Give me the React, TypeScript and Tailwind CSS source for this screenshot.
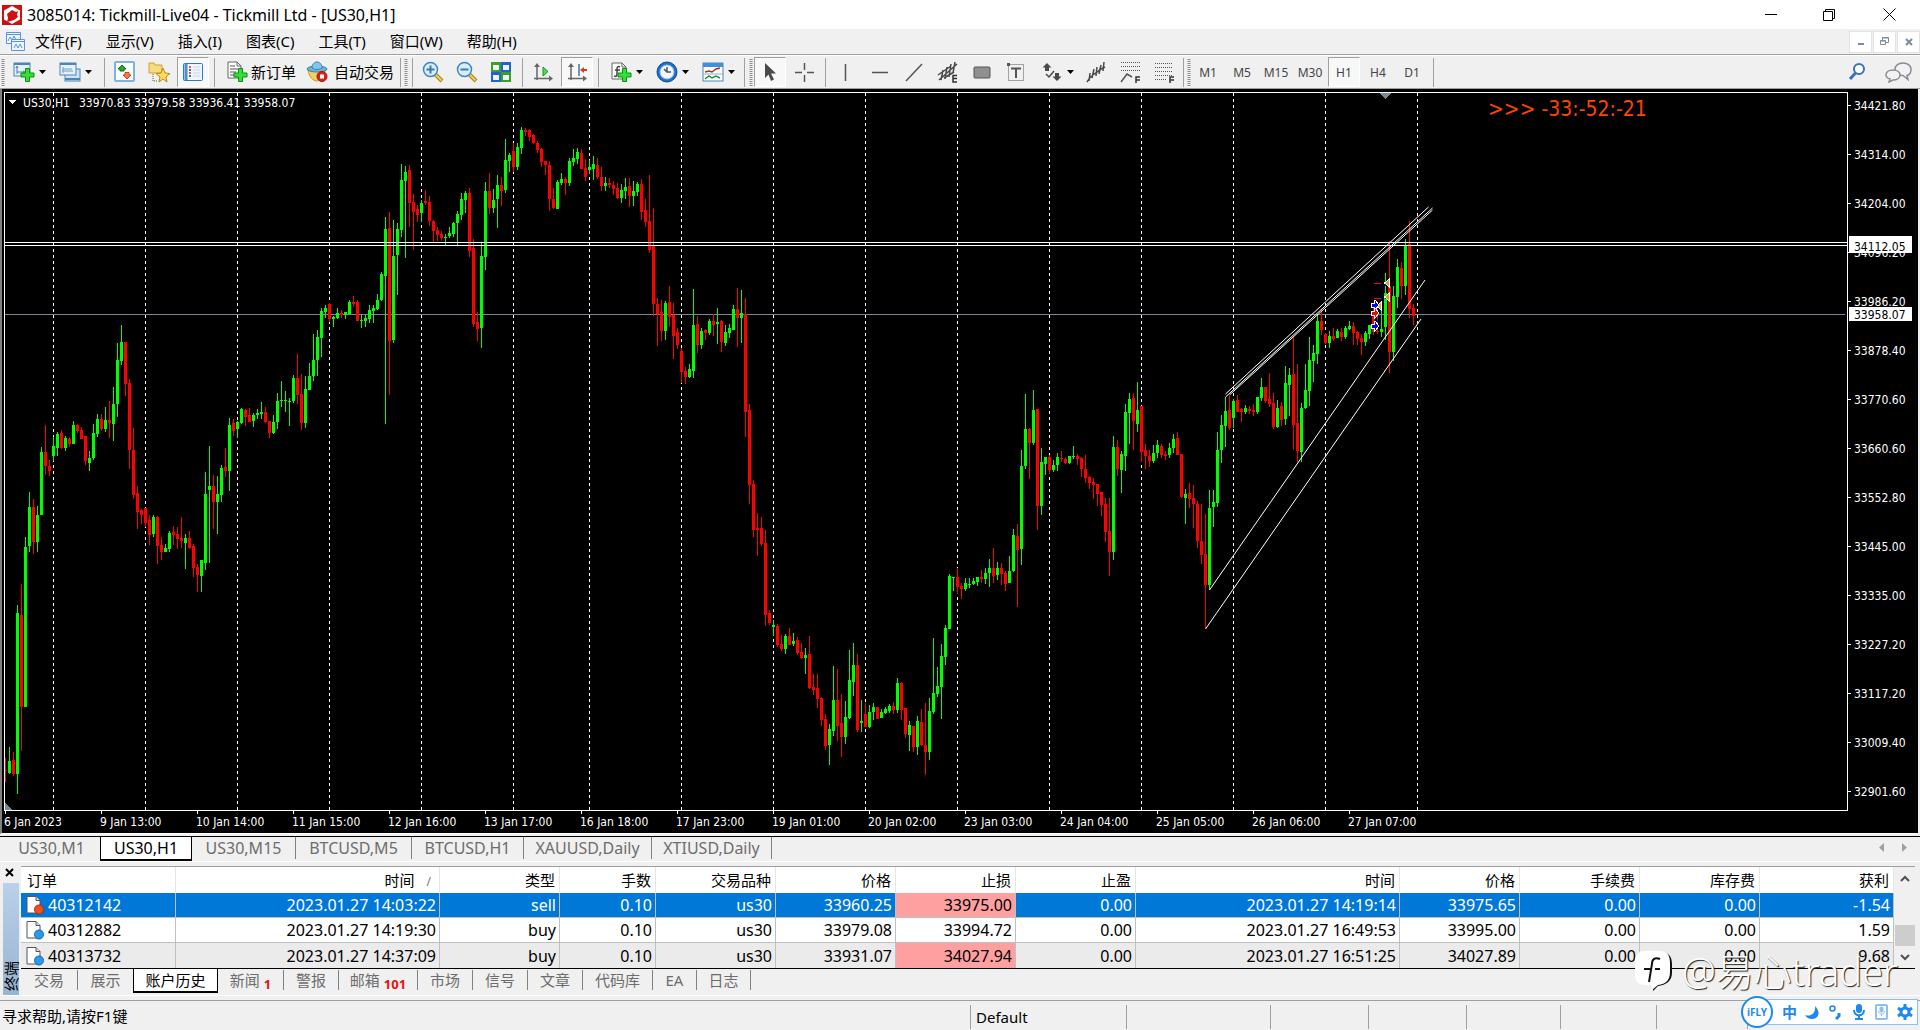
import { useState } from 'react';
import type { ReactNode } from 'react';

// every candle is colour + high, body top, body bottom, low (in chart steps from the top)
const CANDLES = `
r1415,1440,1444,1466 g1392,1422,1447,1449 r1403,1420,1449,1454 g1091,1108,1449,1492 r1047,1112,1307,1401 g947,968,1307,1307
g852,884,966,979 r867,884,958,983 g881,901,958,979 g756,767,901,901 r710,767,797,816 r784,797,807,818 g735,754,776,786
g725,729,759,776 r720,727,759,761 g733,737,759,765 r735,740,750,756 g701,710,750,750 r708,710,723,727 r714,720,740,740
r733,733,786,795 g765,780,790,807 g708,727,780,784 g687,697,729,735 r687,697,718,723 g672,699,718,725 r659,699,706,737
g629,665,708,744 g536,572,665,693 g498,534,574,583 r534,534,623,648 r612,621,763,803 r716,763,858,867 r839,854,894,930
r888,890,901,920 r885,885,917,926 r901,911,943,964 g901,905,941,947 r903,905,966,1004 r947,964,979,996 g962,970,979,979
g934,939,972,979 r924,937,943,964 r926,941,951,972 r905,949,956,970 g941,949,960,1015 r934,949,970,973 r962,966,1013,1032
r1004,1011,1028,1064 g996,996,1030,1064 g809,856,1002,1017 g754,839,848,1002 r816,839,873,930 g818,856,873,941 g795,801,858,873
r759,799,807,820 g695,710,807,850 r697,706,723,733 g701,703,718,737 g674,676,706,708 r676,678,693,712 r674,689,703,703
g684,689,701,714 g676,684,689,697 g661,682,687,697 r672,682,703,706 r701,701,727,737 g689,703,727,729 g642,659,703,718
g617,657,660,672 g638,657,660,682 g653,658,661,712 g604,610,659,663 r559,610,646,665 r602,644,706,720 g606,634,706,716
g578,606,636,636 g517,572,606,617 g509,523,572,606 g462,468,525,566 g456,462,470,483 r451,453,485,492 g479,481,485,502
g462,473,483,485 r466,473,477,483 g470,470,477,485 g445,449,475,475 r436,449,453,460 r445,449,489,489 g477,487,490,504
g477,483,489,502 g456,466,485,494 g456,462,468,494 g432,445,464,466 g386,390,445,447 g269,295,394,708 r259,292,532,646
g275,352,530,536 g282,295,350,434 g157,191,297,311 g161,174,193,356 r159,170,240,290 r220,237,259,339 r244,252,265,280
g233,239,261,280 r212,235,239,244 r225,237,278,288 r275,278,299,322 r290,297,307,320 r299,305,314,320 g305,311,314,328
g290,303,309,314 g280,282,305,311 g257,263,282,328 g218,231,265,275 g214,218,233,261 r208,218,341,354 r316,335,496,502
r470,492,506,532 g324,352,504,547 g195,214,354,381 r176,214,250,263 g210,233,250,261 g180,201,231,292 r184,201,214,246
g104,148,212,218 g133,138,150,174 r112,129,163,174 g112,121,163,170 g78,85,123,136 r81,85,89,97 r83,85,100,108
r93,95,112,114 r108,112,127,133 r123,125,153,163 r150,150,159,180 r150,159,231,256 r208,231,250,252 g191,195,252,252
g176,189,197,201 r184,189,197,222 g144,150,197,203 g125,144,153,161 g123,131,146,157 r125,133,167,167 r146,165,184,193
g148,163,170,178 g140,157,167,191 r144,159,184,189 r163,184,203,214 g184,197,203,214 r186,197,201,208 r193,201,210,222
r197,208,229,231 g199,212,229,239 g186,206,214,231 r186,203,225,248 g193,214,225,246 g195,199,216,225 r189,199,259,275
r231,254,280,290 r180,278,339,345 r250,330,453,479 r441,453,475,542 r445,470,511,532 g447,451,511,530 r415,449,481,502
r451,477,521,570 r504,513,540,549 r547,553,598,621 r587,595,608,623 g581,591,608,610 g422,498,595,610 r479,496,540,557
g504,511,540,549 r506,509,515,530 g485,489,515,519 r475,489,498,521 g462,492,496,538 r487,489,534,555 g498,513,536,542
g496,504,515,525 g456,464,509,509 r420,464,483,545 g424,473,483,536 r441,475,682,735 r665,678,837,877 r826,835,932,947
r896,928,932,987 r905,928,962,966 r932,960,1112,1136 r1102,1108,1129,1134 g1123,1134,1138,1157 r1132,1136,1176,1180
r1155,1174,1184,1189 g1153,1157,1184,1195 r1140,1157,1176,1176 g1151,1168,1174,1178 r1159,1165,1193,1197 r1172,1191,1204,1206
g1182,1197,1204,1237 r1157,1195,1267,1269 r1237,1265,1271,1282 r1237,1267,1290,1309 r1286,1288,1335,1348 r1322,1333,1390,1398
g1343,1354,1388,1430 g1220,1293,1358,1369 r1227,1293,1348,1380 r1280,1341,1371,1413 g1295,1329,1371,1386 g1187,1250,1331,1333
g1172,1218,1254,1284 r1195,1218,1356,1360 g1293,1337,1341,1360 r1299,1322,1350,1350 g1303,1318,1350,1352 g1299,1307,1318,1335
r1307,1307,1333,1333 g1312,1318,1331,1331 g1307,1312,1320,1322 g1301,1305,1316,1320 r1297,1305,1314,1322 g1246,1257,1314,1320
r1254,1257,1314,1335 r1310,1310,1365,1373 g1337,1346,1367,1401 r1348,1348,1392,1403 g1326,1337,1392,1409 r1312,1339,1388,1390
r1299,1388,1403,1451 g1288,1316,1403,1420 g1161,1278,1318,1322 g1223,1263,1280,1286 g1174,1199,1265,1333 g1134,1140,1201,1218
g1026,1030,1142,1142 g1032,1032,1034,1062 r1013,1032,1053,1068 r1045,1051,1057,1079 g1034,1045,1057,1061 g1034,1046,1049,1055
g1034,1040,1047,1049 g1032,1032,1042,1051 r1017,1032,1036,1045 g1013,1023,1036,1047 g994,1013,1023,1053 r970,1013,1030,1045
g1000,1013,1028,1038 r1002,1013,1026,1049 r1019,1023,1047,1062 g987,1019,1045,1045 g930,943,1019,1021 r920,945,975,1095
g763,797,972,1006 g644,718,797,803 r716,718,748,824 g636,678,748,752 r676,676,881,932 g759,788,881,901 g778,778,792,816
r773,778,805,814 g784,795,805,809 g769,778,795,807 r765,779,782,788 r778,782,790,792 g776,776,790,792 g754,775,778,782
r771,776,782,795 r778,780,803,820 r773,803,822,833 r818,820,833,845 r822,831,837,867 r835,835,856,881 r852,852,879,903
r865,877,937,958 r865,934,979,1030 g733,756,979,996 r742,756,803,818 g765,771,805,854 g665,682,776,807 g642,655,684,750
r642,653,701,763 g619,678,708,725 r669,670,767,788 r750,763,776,803 r763,776,786,799 g752,769,786,790 g742,752,769,780
r750,754,773,780 r765,771,776,784 g748,759,773,780 g729,740,759,769 r725,737,773,773 r771,771,862,865 g845,856,865,920
r833,854,867,885 r837,865,877,928 r871,877,956,970 r877,956,985,1004 r898,983,1049,1140 g848,886,1049,1059 g848,873,884,926
g725,763,875,884 g689,710,763,790 g650,680,712,756 r648,678,716,720 g655,659,695,716 r646,657,682,682 r674,676,682,703
g667,674,682,687 r670,676,680,687 r665,679,682,691 g650,651,682,687 g610,629,653,659 r629,629,659,663 r600,655,665,672
r642,663,714,718 g657,674,714,716 r661,670,699,712 g585,621,697,710 g589,604,625,691 r521,602,710,763 r581,706,765,788
g663,674,767,788 g581,636,674,676 g523,572,638,670 g540,557,574,619 g477,489,559,581 r466,489,509,519 r515,517,536,538
g511,521,536,547 r504,521,528,532 g506,511,525,525 r504,513,523,532 g500,504,523,528 g489,500,506,509 r492,500,515,540
r511,513,528,540 r517,525,534,562 g511,515,534,542 g498,498,517,528 r460,480,512,519 r462,510,513,517 g460,506,513,523
g388,430,502,530 r320,415,555,600 g415,436,555,574 g358,375,439,462 r364,377,415,443 g316,328,415,434 r278,326,464,483
r453,462,479,498`.trim().split(/\s+/).map((item) => ({
  color: item[0] === 'g' ? '#00ff00' : '#ff0000',
  values: item.slice(1).split(',').map(Number),
}));

//chart step to pixel
const STEP = 740 / 1568;
const toY = (value: number) => Math.round(value * STEP);

const DAY_LINES = [53, 145, 237, 329, 421, 513, 589, 681, 773, 865, 957, 1049, 1141, 1233, 1325, 1417];

const DATES = [
  '6 Jan 2023', '9 Jan 13:00', '10 Jan 14:00', '11 Jan 15:00', '12 Jan 16:00', '13 Jan 17:00', '16 Jan 18:00', '17 Jan 23:00',
  '19 Jan 01:00', '20 Jan 02:00', '23 Jan 03:00', '24 Jan 04:00', '25 Jan 05:00', '26 Jan 06:00', '27 Jan 07:00',
];

const PRICES = [
  '34421.80', '34314.00', '34204.00', '34096.20', '33986.20', '33878.40', '33770.60', '33660.60',
  '33552.80', '33445.00', '33335.00', '33227.20', '33117.20', '33009.40', '32901.60',
];

const MENUS = ['文件(F)', '显示(V)', '插入(I)', '图表(C)', '工具(T)', '窗口(W)', '帮助(H)'];

const TIMEFRAMES = ['M1', 'M5', 'M15', 'M30', 'H1', 'H4', 'D1'];

const CHART_TABS = [
  { name: 'US30,M1', width: 'w-[97px]' },
  { name: 'US30,H1', width: 'w-[92px]' },
  { name: 'US30,M15', width: 'w-[104px]' },
  { name: 'BTCUSD,M5', width: 'w-[116px]' },
  { name: 'BTCUSD,H1', width: 'w-[112px]' },
  { name: 'XAUUSD,Daily', width: 'w-[128px]' },
  { name: 'XTIUSD,Daily', width: 'w-[120px]' },
];

const TERMINAL_TABS = [
  { name: '交易', width: 'w-[57px]' },
  { name: '展示', width: 'w-[55px]' },
  { name: '账户历史', width: 'w-[85px]' },
  { name: '新闻', width: 'w-[66px]', count: '1' },
  { name: '警报', width: 'w-[55px]' },
  { name: '邮箱', width: 'w-[79px]', count: '101' },
  { name: '市场', width: 'w-[55px]' },
  { name: '信号', width: 'w-[55px]' },
  { name: '文章', width: 'w-[55px]' },
  { name: '代码库', width: 'w-[70px]' },
  { name: 'EA', width: 'w-[44px]' },
  { name: '日志', width: 'w-[54px]' },
];

const COLUMNS = [
  { name: '订单', width: 'w-[155px]' },
  { name: '时间', width: 'w-[264px]' },
  { name: '类型', width: 'w-[120px]' },
  { name: '手数', width: 'w-24' },
  { name: '交易品种', width: 'w-[120px]' },
  { name: '价格', width: 'w-[120px]' },
  { name: '止损', width: 'w-[120px]' },
  { name: '止盈', width: 'w-[120px]' },
  { name: '时间', width: 'w-[264px]' },
  { name: '价格', width: 'w-[120px]' },
  { name: '手续费', width: 'w-[120px]' },
  { name: '库存费', width: 'w-[120px]' },
  { name: '获利', width: '' },
];

const ORDERS = [
  ['40312142', '2023.01.27 14:03:22', 'sell', '0.10', 'us30', '33960.25', '33975.00', '0.00', '2023.01.27 14:19:14', '33975.65', '0.00', '0.00', '-1.54'],
  ['40312882', '2023.01.27 14:19:30', 'buy', '0.10', 'us30', '33979.08', '33994.72', '0.00', '2023.01.27 16:49:53', '33995.00', '0.00', '0.00', '1.59'],
  ['40313732', '2023.01.27 14:37:09', 'buy', '0.10', 'us30', '33931.07', '34027.94', '0.00', '2023.01.27 16:51:25', '34027.89', '0.00', '0.00', '9.68'],
];

//orders closed by their stop loss
const STOPPED = ['33975.00', '34027.94'];

const Svg = ({ children }: { children: ReactNode }) => (
  <svg width="22" height="22" viewBox="0 0 22 22" fill="none" className="shrink-0">{children}</svg>
);

const Plus = () => (
  <path d="M12.500 7.500h4v4.500h4.500v4h-4.500v4.500h-4v-4.500H8v-4h4.500z" fill="#35e035" stroke="#0b8f14" />
);

const Caret = () => (
  <svg width="7" height="4" viewBox="0 0 7 4" className="shrink-0"><path d="M0 0h7L3.500 4z" fill="#000" /></svg>
);

const NewChartIcon = () => (
  <Svg>
    <rect x="1" y="2" width="16" height="13" fill="#e4f1fb" stroke="#4b86b8" />
    <path d="M1 3h16" stroke="#4b86b8" strokeWidth="2" />
    <path d="M4 6v7M3 7l1-2 1 2M4 11h7M10 10l2 1-2 1" stroke="#5b7d9c" />
    <Plus />
  </Svg>
);

const ProfilesIcon = () => (
  <Svg>
    <rect x="6" y="8" width="15" height="12" fill="#cfe4f5" stroke="#4b86b8" />
    <path d="M6 18h15" stroke="#4b86b8" strokeWidth="2" />
    <rect x="1" y="2" width="16" height="12" fill="#e4f1fb" stroke="#4b86b8" />
    <path d="M1 3h16" stroke="#4b86b8" strokeWidth="2" />
    <path d="M4 6v6M3 10h11M4 8h9" stroke="#7d9ebb" />
  </Svg>
);

const MarketIcon = () => (
  <Svg>
    <rect x="1" y="1" width="19" height="19" rx="1" fill="#fafdff" stroke="#7db4dc" strokeWidth="2" />
    <path d="M8 4l4 4h-2v2H6V8H4z" fill="#27a827" stroke="#0f7a18" />
    <path d="M13 18l-4-4h2v-2.500h4V14h2z" fill="#ff7a4a" stroke="#d3431c" />
  </Svg>
);

const NavigatorIcon = () => (
  <Svg>
    <path d="M1 2h5l1 2h7v8H1z" fill="#f6dc7c" stroke="#c8a13a" />
    <path d="M5 13v7h4" stroke="#555" strokeDasharray="1 1" />
    <path d="M15 7l2 5 5 .5-4 3.500 1 5-4-3-4 3 1-5-4-3.500 5-.5z" fill="#ffd95a" stroke="#b58a1c" />
  </Svg>
);

const TerminalIcon = () => (
  <Svg>
    <rect x="1.500" y="2.500" width="19" height="17" rx="1" fill="#eef6fd" stroke="#3077c2" />
    <path d="M4 3v16" stroke="#4d8fd0" strokeWidth="3" />
    <path d="M7 6h2M7 12h2" stroke="#e02020" strokeWidth="1.500" />
    <path d="M7 9h2M7 15h2" stroke="#333" strokeWidth="1.500" />
    <path d="M11 6h7M11 9h7M11 12h7M11 15h7" stroke="#c7d5e4" />
  </Svg>
);

const NewOrderIcon = () => (
  <Svg>
    <path d="M2 1h9l4 4v12H2z" fill="#fff" stroke="#666" />
    <path d="M11 1v4h4" stroke="#666" />
    <path d="M4 5h5M4 8h8M4 11h6M4 14h4" stroke="#555" />
    <Plus />
  </Svg>
);

const AutoTradeIcon = () => (
  <Svg>
    <path d="M2 9c1 7 5 11 9 11 4-1 8-4 8-11z" fill="#f2cf5e" stroke="#c99b27" />
    <ellipse cx="11" cy="8" rx="10" ry="3" fill="#6db4dc" stroke="#3c83ad" />
    <path d="M6 7c0-8 10-8 10 0-3 2-7 2-10 0z" fill="#84c6ea" stroke="#3c83ad" />
    <circle cx="16" cy="15.500" r="5" fill="#dc2114" stroke="#a8130a" />
    <rect x="14" y="13.500" width="4" height="4" fill="#fff" />
  </Svg>
);

const ZoomIcon = ({ plus }: { plus?: boolean }) => (
  <Svg>
    <path d="M13 13l7 7" stroke="#a8811d" strokeWidth="4" />
    <path d="M13 13l6.500 6.500" stroke="#f2cf4a" strokeWidth="2" />
    <circle cx="8.500" cy="8.500" r="7" fill="#d8edfb" stroke="#3e86c6" strokeWidth="1.500" />
    <path d={plus ? 'M4.500 8.500h8M8.500 4.500v8' : 'M4.500 8.500h8'} stroke="#3b78ad" strokeWidth="2" />
  </Svg>
);

const TileIcon = () => (
  <Svg>
    <path d="M1 1h10v10H1zM11 11h10v10H11z" fill="#3da024" />
    <path d="M11 1h10v10H11zM1 11h10v10H1z" fill="#2462cf" />
    <path d="M3 4h6v5H3zM13 4h6v5h-6zM3 14h6v5H3zM13 14h6v5h-6z" fill="#eaf4ff" />
  </Svg>
);

const AutoScrollIcon = () => (
  <Svg>
    <path d="M5 4v15M2 17.500h17" stroke="#666" strokeWidth="1.500" />
    <path d="M2 6l3-4 3 4zM17 14.500l4 3-4 3z" fill="#666" />
    <path d="M11 6v9l5-4.500z" fill="#4fdc5c" stroke="#0e9a1c" />
  </Svg>
);

const ShiftIcon = () => (
  <Svg>
    <path d="M5 4v15M2 17.500h17" stroke="#666" strokeWidth="1.500" />
    <path d="M2 6l3-4 3 4zM17 14.500l4 3-4 3z" fill="#666" />
    <path d="M13 3v12" stroke="#3b78ad" strokeWidth="1.500" />
    <path d="M14 9l4-3v2h3v2h-3v2z" fill="#d9401a" />
  </Svg>
);

const IndicatorIcon = () => (
  <Svg>
    <path d="M2 2h10l4 4v12H2z" fill="#fff" stroke="#666" />
    <path d="M12 2v4h4" stroke="#666" />
    <path d="M10 6c-2-1-3 0-3 2v5c0 2-1 3-3 2M5 9h5" stroke="#444" strokeWidth="1.500" />
    <Plus />
  </Svg>
);

const ClockIcon = () => (
  <Svg>
    <circle cx="11" cy="11" r="10" fill="#1d6fc9" stroke="#114a8c" />
    <circle cx="11" cy="11" r="7" fill="#f2f7fb" stroke="#8fc1ee" />
    <path d="M11 6v5h4M8 8l3 3" stroke="#555" strokeWidth="1.500" />
  </Svg>
);

const TemplateIcon = () => (
  <Svg>
    <rect x="1" y="2" width="20" height="18" fill="#fff" stroke="#4b86b8" />
    <path d="M1 4h20" stroke="#3f8fdc" strokeWidth="4" />
    <path d="M1 13h20" stroke="#7db4dc" />
    <path d="M3 11l4-1 3 1 4-3 4-1" stroke="#b03018" strokeWidth="1.500" />
    <path d="M3 18l4-3 3 2 4-2 4 2" stroke="#229035" strokeWidth="1.500" />
  </Svg>
);

const CursorIcon = () => (
  <Svg><path d="M6 2v15l3.500-3.500L12 20l3-1.500-3-6h5z" fill="#4a4a4a" /></Svg>
);

const CrosshairIcon = () => (
  <Svg><path d="M2 11.500h7M14 11.500h7M11.500 2v7M11.500 14v7" stroke="#555" strokeWidth="1.500" /></Svg>
);

const LineIcon = ({ d }: { d: string }) => (
  <Svg><path d={d} stroke="#555" strokeWidth="1.500" /></Svg>
);

const ChannelIcon = () => (
  <Svg>
    <path d="M1 14L14 5M2 19L20 3M7 17l10-6M6 9l-2 10M10 6L8 18M14 3l-2 13M18 1l-2 11" stroke="#4a4a4a" strokeWidth="1.500" />
    <path d="M20 14.500h-4v6.500h4M16 17.500h4" stroke="#333" strokeWidth="1.500" />
  </Svg>
);

const RectIcon = () => (
  <Svg><rect x="3" y="6" width="16" height="11" rx="1" fill="#8f8f8f" stroke="#555" /></Svg>
);

const TextIcon = () => (
  <Svg>
    <rect x="3.500" y="3.500" width="15" height="16" stroke="#555" strokeDasharray="1 1" />
    <path d="M6 7.500h10M11 7v10" stroke="#555" strokeWidth="2" />
    <path d="M2 2h3v3H2z" fill="#555" />
  </Svg>
);

const ArrowsIcon = () => (
  <Svg>
    <path d="M6 2l4.500 4.500H8V10H4V6.500H1.500z" fill="#4a4a4a" />
    <path d="M16 20l-4.500-4.500H14V12h4v3.500h2.500z" fill="#4a4a4a" />
    <path d="M5 13l3 3 5-6" stroke="#4a4a4a" strokeWidth="1.500" />
  </Svg>
);

const AndrewsIcon = () => (
  <Svg>
    <path d="M2 21l4-6M5 12l-1 8M4 15l4 1M9 8l-2 9M7 14l4-2M12 6l-1 9M11 12l5-4M16 4l-2 9M14 9l6-3M19 1l-1 9" stroke="#4a4a4a" strokeWidth="1.500" />
  </Svg>
);

const FiboIcon = ({ fan }: { fan?: boolean }) => (
  <Svg>
    <path d={fan ? 'M2 1.500h19M2 5.500h19M2 9.500h19' : 'M2 2.500h18M2 6.500h18M2 10.500h18M2 14.500h18'} stroke="#555" strokeDasharray="1 1" />
    {fan ? <path d="M2 21l6-8 5 3" stroke="#555" strokeWidth="1.500" /> : <path d="M2 18.500h11" stroke="#555" strokeDasharray="1 1" />}
    <path d="M17 22v-6h4M17 19h4" stroke="#333" strokeWidth="1.500" />
  </Svg>
);

const Sep = ({ tight }: { tight?: boolean }) => (
  <div className={`flex shrink-0 justify-center ${tight ? 'w-[5px]' : 'w-2'}`}><div className="h-[29px] w-px bg-[#a0a0a0]" /></div>
);

const Grip = () => (
  <div className="flex w-[5px] shrink-0 justify-center">
    <svg width="4" height="27" viewBox="0 0 4 27"><path d="M2 0v27" stroke="#8c8c8c" strokeWidth="3" strokeDasharray="1 1" /></svg>
  </div>
);

interface ToolProps {
  label: string;
  pressed?: boolean;
  children: ReactNode;
}

const Tool = ({ label, pressed, children }: ToolProps) => (
  <button
    aria-label={label}
    className={
      pressed
        ? 'mx-px flex h-[30px] w-8 shrink-0 items-center justify-center border border-b-white border-l-[#a0a0a0] border-r-white border-t-[#a0a0a0] bg-[#f8f8f8]'
        : 'flex h-[30px] w-[34px] shrink-0 items-center justify-center'
    }
  >
    {children}
  </button>
);

const DropTool = ({ label, children }: { label: string; children: ReactNode }) => (
  <button aria-label={label} className="flex h-[30px] w-[46px] shrink-0 items-center gap-1 pl-2">
    {children}
    <Caret />
  </button>
);

const TitleBar = () => (
  <header className="flex h-[29px] items-center bg-white pl-0.5">
    <svg width="20" height="20" viewBox="0 0 20 20">
      <rect width="20" height="20" fill="#cf1010" />
      <path d="M10 1l8 4.500v9L10 19l-8-4.500v-9z" fill="#fff" />
      <path d="M10 5l4 2 2-1-1 4 1 2-4 3-3 1-4 1 1-4-1-4z" fill="#cf1010" />
    </svg>
    <h1 className="ml-[5px] text-base">3085014: Tickmill-Live04 - Tickmill Ltd - [US30,H1]</h1>
    <div className="ml-auto flex">
      <button aria-label="最小化" className="flex h-[29px] w-[58px] items-center justify-center">
        <svg width="12" height="12" viewBox="0 0 12 12"><path d="M0 5.500h12" stroke="#000" /></svg>
      </button>
      <button aria-label="还原" className="flex h-[29px] w-[58px] items-center justify-center">
        <svg width="12" height="12" viewBox="0 0 12 12" fill="none" stroke="#000"><path d="M.5 2.500h9v9h-9zM2.500 2.500v-2h9v9h-2" /></svg>
      </button>
      <button aria-label="关闭" className="flex h-[29px] w-[62px] items-center justify-center">
        <svg width="13" height="13" viewBox="0 0 13 13" stroke="#000"><path d="M.5.5l12 12M12.500.5l-12 12" /></svg>
      </button>
    </div>
  </header>
);

const MenuBar = () => (
  <nav className="flex h-[26px] items-center border-b border-[#a0a0a0] pl-[5px]">
    <svg width="21" height="21" viewBox="0 0 21 21" fill="#eef5ff" stroke="#5b92e6">
      <path d="M1.500 1.500h14v11h-14zM1.500 3.500h14" />
      <path d="M3 10l2-4 2 3 2-4 2 4" />
      <path d="M6.500 8.500h13v11h-13zM6.500 10.500h13" />
      <path d="M9 17l2-4 2 4 2-4 2 4" />
    </svg>
    <ul className="ml-[9px] flex gap-6 text-[15px]">
      {MENUS.map((menu) => (
        <li key={menu}><button className="block">{menu}</button></li>
      ))}
    </ul>
    <div className="ml-auto flex gap-px text-[#7a8ca0]">
      <button aria-label="最小化图表" className="flex h-[22px] w-[23px] items-center justify-center border border-[#e4e4e4] bg-white">
        <svg width="8" height="8" viewBox="0 0 8 8"><path d="M1 6h6" stroke="currentColor" strokeWidth="2" /></svg>
      </button>
      <button aria-label="还原图表" className="flex h-[22px] w-[23px] items-center justify-center border border-[#e4e4e4] bg-white">
        <svg width="9" height="9" viewBox="0 0 9 9" fill="none" stroke="currentColor"><path d="M.5 3.500h5v4h-5zM.5 4h5M2.500 3V.5h6v5H6M2.500 1h6" /></svg>
      </button>
      <button aria-label="关闭图表" className="flex h-[22px] w-[23px] items-center justify-center border border-[#e4e4e4] bg-white">
        <svg width="8" height="8" viewBox="0 0 8 8"><path d="M1 1l6 6M7 1L1 7" stroke="currentColor" strokeWidth="2" /></svg>
      </button>
    </div>
  </nav>
);

const Toolbar = () => {
  const [timeframe, setTimeframe] = useState('H1');

  return (
    <div className="flex h-[34px] items-center border-b border-t border-b-[#a0a0a0] border-t-white">
      <Grip />
      <DropTool label="新图表"><NewChartIcon /></DropTool>
      <DropTool label="配置文件"><ProfilesIcon /></DropTool>
      <div className="w-[3px]" />
      <Sep />
      <Tool label="市场报价"><MarketIcon /></Tool>
      <Tool label="导航"><NavigatorIcon /></Tool>
      <Tool label="终端" pressed><TerminalIcon /></Tool>
      <Sep />
      <button className="flex h-[30px] w-[82px] shrink-0 items-center gap-[3px] pl-2 text-[15px] whitespace-nowrap"><NewOrderIcon />新订单</button>
      <button className="flex h-[30px] w-[98px] shrink-0 items-center gap-[6px] pl-[6px] text-[15px] whitespace-nowrap"><AutoTradeIcon />自动交易</button>
      <Sep tight />
      <Grip />
      <Sep />
      <Tool label="放大"><ZoomIcon plus /></Tool>
      <Tool label="缩小"><ZoomIcon /></Tool>
      <Tool label="平铺窗口"><TileIcon /></Tool>
      <Sep />
      <Tool label="自动滚动"><AutoScrollIcon /></Tool>
      <Tool label="图表平移" pressed><ShiftIcon /></Tool>
      <Sep />
      <DropTool label="指标"><IndicatorIcon /></DropTool>
      <DropTool label="周期"><ClockIcon /></DropTool>
      <DropTool label="模板"><TemplateIcon /></DropTool>
      <Sep />
      <Grip />
      <Tool label="光标" pressed><CursorIcon /></Tool>
      <Tool label="十字线"><CrosshairIcon /></Tool>
      <Sep />
      <Tool label="垂直线"><LineIcon d="M10.500 3v17" /></Tool>
      <Tool label="水平线"><LineIcon d="M3 11.500h16" /></Tool>
      <Tool label="趋势线"><LineIcon d="M3 20L19 3" /></Tool>
      <Tool label="等距通道"><ChannelIcon /></Tool>
      <Tool label="矩形"><RectIcon /></Tool>
      <Tool label="文本"><TextIcon /></Tool>
      <DropTool label="箭头"><ArrowsIcon /></DropTool>
      <Tool label="安德鲁分叉线"><AndrewsIcon /></Tool>
      <Tool label="斐波那契扇形"><FiboIcon fan /></Tool>
      <Tool label="斐波那契回调"><FiboIcon /></Tool>
      <Sep tight />
      <Grip />
      <div className="flex text-xs text-[#444]">
        {TIMEFRAMES.map((item) => (
          <button
            key={item}
            onClick={() => setTimeframe(item)}
            className={
              item === timeframe
                ? 'mx-px h-[30px] w-8 border border-b-white border-l-[#a0a0a0] border-r-white border-t-[#a0a0a0] bg-[#f8f8f8] pt-px'
                : 'h-[30px] w-[34px] pt-px'
            }
          >
            {item}
          </button>
        ))}
      </div>
      <Sep />
      <div className="ml-auto flex">
        <button aria-label="搜索" className="flex w-10 items-center justify-center">
          <svg width="20" height="20" viewBox="0 0 20 20" fill="none">
            <circle cx="12" cy="7" r="5" fill="#fff" stroke="#3a6fc0" strokeWidth="2" />
            <path d="M8.500 11L3 17" stroke="#3a6fc0" strokeWidth="3" />
          </svg>
        </button>
        <button aria-label="聊天" className="flex w-[43px] items-center justify-center">
          <svg width="28" height="22" viewBox="0 0 28 22" fill="#f2f2f4" stroke="#8b8b95" strokeWidth="1.500">
            <path d="M18 2c5 0 8 3 8 6.500S24 14 22 14.500l1 4-5-4c-5 0-8-2.500-8-6S13 2 18 2z" />
            <path d="M8 9c4 0 7 2 7 5s-3 5-7 5l-4 2 1-3c-3-1-4-2-4-4 0-3 3-5 7-5z" />
          </svg>
        </button>
      </div>
    </div>
  );
};

const EntryArrow = ({ x, y, color }: { x: number; y: number; color: string }) => (
  <path transform={`translate(${x} ${y})`} d="M-3 -2h3v-3h1l4 5-4 5h-1v-3h-3z" fill={color} stroke="#fff" />
);

const ExitArrow = ({ x, y }: { x: number; y: number }) => (
  <path transform={`translate(${x} ${y})`} d="M2.500 -4v8l-5-4z" fill="#daa520" stroke="#fff" />
);

const Chart = () => (
  <main className="flex h-[745px] border-b border-l-2 border-b-white border-l-[#808080] bg-black font-['DejaVu_Sans_Condensed','DejaVu_Sans',sans-serif] text-xs">
    <svg height="744" className="min-w-0 flex-1" shapeRendering="crispEdges">
      <g transform="translate(-2 1)">
        <g stroke="#fff" strokeDasharray="3 3">
          {DAY_LINES.map((x) => <path key={x} d={`M${x}.5 3V720`} />)}
        </g>
        <line x1="5" x2="100%" y1="224.500" y2="224.500" stroke="#778899" />
        {CANDLES.map(({ color, values: [high, top, bottom, low] }, index) => {
          const x = 5 + index * 4;
          return (
            <g key={index} fill={color}>
              <rect x={x} y={toY(high)} width="1" height={toY(low) - toY(high)} />
              <rect x={index ? x - 1 : x} y={toY(top)} width={index ? 3 : 2} height={Math.max(1, toY(bottom) - toY(top))} />
            </g>
          );
        })}
        <g stroke="#fff">
          <path shapeRendering="auto" d="M1225.500 304L1428.500 117M1225.500 307L1432.500 118M1229.500 305L1432.500 120M1209.500 500L1425 190M1205.500 539L1421 229" />
          <line x1="4" x2="200%" y1="152.500" y2="152.500" />
          <line x1="4" x2="200%" y1="155.500" y2="155.500" />
          <line x1="4" x2="200%" y1="2.500" y2="2.500" />
          <line x1="4" x2="200%" y1="720.500" y2="720.500" />
          <line x1="4.500" x2="4.500" y1="2" y2="721" />
        </g>
        <path d="M1374 193.500h7M1374 208.500h7" stroke="#f00" />
        <path d="M1374 216l5-1M1374 236l4-6 4-15 5-9M1374 223l5-6 4-12 3-14" stroke="#0000ff" strokeDasharray="2 3" fill="none" />
        <ExitArrow x={1379} y={216} />
        <EntryArrow x={1374} y={215} color="#0000ff" />
        <EntryArrow x={1374} y={236} color="#0000ff" />
        <EntryArrow x={1374} y={223} color="#ff0000" />
        <ExitArrow x={1387} y={193} />
        <ExitArrow x={1387} y={207} />
        <path d="M1379 3h12l-6 6z" fill="#778899" />
        <path d="M5 713v7h8z" fill="#778899" />
        <path d="M8 10h9l-4.500 4z" fill="#fff" />
        <g fill="#fff">
          <text x="23" y="17">US30,H1</text>
          <text x="79" y="17">33970.83 33979.58 33936.41 33958.07</text>
          {DATES.map((date, index) => (
            <g key={date}>
              <rect x={5 + index * 96} y="721" width="1" height="3" />
              <text x={4 + index * 96} y="736">{date}</text>
            </g>
          ))}
        </g>
        <text x="1488" y="26" fill="#ff4500" className="text-[21px]">&gt;&gt;&gt; -33:-52:-21</text>
      </g>
    </svg>
    <svg width="73" height="744" className="shrink-0 border-r-2 border-[#f0f0f0]" shapeRendering="crispEdges">
      <path d="M.5 3V722" stroke="#fff" />
      {PRICES.map((price, index) => (
        <g key={price} fill="#fff">
          <rect x="1" y={16 + index * 49} width="3" height="1" />
          <text x="7" y={21 + index * 49}>{price}</text>
        </g>
      ))}
      <rect x="2" y="147" width="63" height="17" fill="#fff" />
      <text x="7" y="162">34112.05</text>
      <rect x="2" y="218" width="63" height="14" fill="#fff" />
      <text x="7" y="230">33958.07</text>
    </svg>
  </main>
);

const ChartTabs = () => {
  const [active, setActive] = useState('US30,H1');

  return (
    <div className="flex h-[26px] items-start border-b border-t border-b-white border-t-black pl-[3px] text-base leading-none text-[#6d6d6d]">
      {CHART_TABS.map(({ name, width }) => (
        <button
          key={name}
          onClick={() => setActive(name)}
          className={
            name === active
              ? `${width} h-6 shrink-0 border-x border-b-2 border-black bg-white text-black`
              : `${width} h-[22px] shrink-0 ${name === 'US30,M1' ? '' : 'border-r border-[#808080]'}`
          }
        >
          {name}
        </button>
      ))}
      <div className="ml-auto flex h-5 items-center gap-4 pr-3">
        <button aria-label="向左"><svg width="7" height="9" viewBox="0 0 7 9"><path d="M6 0v9L1 4.500z" fill="#a0a0a0" /></svg></button>
        <button aria-label="向右"><svg width="7" height="9" viewBox="0 0 7 9"><path d="M1 0v9l5-4.500z" fill="#a0a0a0" /></svg></button>
      </div>
    </div>
  );
};

const OrderIcon = ({ sell }: { sell: boolean }) => (
  <svg width="20" height="20" viewBox="0 0 20 20" className="shrink-0">
    <path d="M2 1.500h9l4 4V18H2z" fill="#fff" stroke="#555" />
    <path d="M11 1.500v4h4" fill="#ddd" stroke="#555" />
    <circle cx="14" cy="14.500" r="4.500" fill={sell ? '#f0501e' : '#2a9bea'} stroke={sell ? '#a82c08' : '#1565ab'} />
  </svg>
);

const OrdersTable = () => (
  <table className="w-full table-fixed border-separate border-spacing-0 text-[15px] leading-5">
    <colgroup>
      {COLUMNS.map(({ width }, index) => <col key={index} className={width} />)}
    </colgroup>
    <thead>
      <tr className="h-[26px] bg-white">
        {COLUMNS.map(({ name }, index) => (
          <th key={index} scope="col" className={`border-r border-[#e5e5e5] py-0 pr-1 font-normal ${index ? 'text-right' : 'pl-[6px] text-left'}`}>
            {name}
            {index === 1 && <span className="pr-1 pl-3 text-xs text-[#777]">/</span>}
          </th>
        ))}
      </tr>
    </thead>
    <tbody className="text-base leading-5">
      {ORDERS.map((order, row) => (
        <tr key={order[0]} className={`h-[25px] ${row === 0 ? 'bg-[#0078d7] text-white' : row === 1 ? 'bg-white' : 'bg-[#ebebeb]'}`}>
          {order.map((value, index) => (
            <td
              key={index}
              className={`border-r border-[#c0c0c0] py-0 pr-[3px] pl-1 text-right ${row < 2 ? 'border-b' : ''} ${STOPPED.includes(value) ? 'bg-[#ffa0a0] text-black' : ''}`}
            >
              {index === 0 ? <span className="flex items-center gap-[3px]"><OrderIcon sell={order[2] === 'sell'} />{value}</span> : value}
            </td>
          ))}
        </tr>
      ))}
    </tbody>
  </table>
);

const Terminal = () => {
  const [active, setActive] = useState('账户历史');

  return (
    <section className="mt-1 flex border-b border-white pr-[5px]">
      <div className="flex w-[21px] shrink-0 flex-col items-center">
        <button aria-label="关闭终端" className="flex h-[13px] items-center pr-0.5">
          <svg width="9" height="9" viewBox="0 0 9 9"><path d="M1 1l7 7M8 1L1 8" stroke="#000" strokeWidth="2" /></svg>
        </button>
        <div className="mt-1 flex w-4 flex-1 flex-col justify-end bg-linear-to-b from-[#b9d1ea] to-[#98b4d2] pb-1 text-[15px] leading-4">
          <span className="[writing-mode:sideways-lr]">终端</span>
        </div>
      </div>
      <div className="min-w-0 flex-1">
        <div className="flex border-b border-t border-b-black border-t-[#a0a0a0]">
          <div className="min-w-0 flex-1"><OrdersTable /></div>
          <div className="flex w-[21px] shrink-0 flex-col items-center">
            <button aria-label="向上滚动" className="flex h-[22px] items-center">
              <svg width="10" height="7" viewBox="0 0 10 7" fill="none"><path d="M1 6l4-4 4 4" stroke="#505050" strokeWidth="2" /></svg>
            </button>
            <div className="flex w-5 flex-1 flex-col justify-end"><div className="h-[21px] bg-[#cdcdcd]" /></div>
            <button aria-label="向下滚动" className="flex h-[22px] items-center">
              <svg width="10" height="7" viewBox="0 0 10 7" fill="none"><path d="M1 1l4 4 4-4" stroke="#505050" strokeWidth="2" /></svg>
            </button>
          </div>
        </div>
        <div className="flex h-[26px] items-start text-[15px] text-[#6d6d6d]">
          {TERMINAL_TABS.map(({ name, width, count }, index) => (
            <button
              key={name}
              onClick={() => setActive(name)}
              className={
                name === active
                  ? `${width} h-6 shrink-0 border-x border-b-2 border-black bg-white text-black leading-5`
                  : `${width} mt-px h-5 shrink-0 leading-5 ${index === 1 ? '' : 'border-r border-[#808080]'}`
              }
            >
              {name}
              {count && <sub className="ml-1 text-[13px] leading-none font-bold text-[#e81010]">{count}</sub>}
            </button>
          ))}
        </div>
      </div>
    </section>
  );
};

const StatusBar = () => (
  <footer className="mt-1 flex flex-1 items-center border-t border-[#a0a0a0] pt-0.5 text-[15px]">
    <div className="w-[970px] pl-0.5">寻求帮助,请按F1键</div>
    <div className="h-6 w-[156px] border-l border-[#a0a0a0] pl-[5px] leading-6">Default</div>
    <div className="h-6 w-[144px] border-l border-[#a0a0a0]" />
    <div className="h-6 w-[98px] border-l border-[#a0a0a0]" />
    <div className="h-6 w-[98px] border-l border-[#a0a0a0]" />
    <div className="h-6 w-[94px] border-l border-[#a0a0a0]" />
    <div className="h-6 w-24 border-l border-[#a0a0a0]" />
    <div className="h-6 w-[91px] border-l border-[#a0a0a0]" />
    <div className="h-6 flex-1 border-l border-[#a0a0a0]" />
  </footer>
);

const ImeBar = () => (
  <div className="absolute right-[2px] bottom-[2px] flex h-8 items-center">
    <div className="z-10 flex size-8 items-center justify-center rounded-full border-2 border-[#1e88f0] bg-white text-[10px] font-bold text-[#1e88f0]">iFLY</div>
    <div className="-ml-4 flex h-[26px] items-center justify-between border border-[#8cc0f5] bg-white pr-px pl-5 text-[#1e88f0]">
      <button className="w-[23px] text-[15px] leading-none font-bold">中</button>
      <button aria-label="夜间" className="flex w-[23px] justify-center">
        <svg width="15" height="15" viewBox="0 0 15 15"><path d="M10 1c4 4 5 9 1 12-4 2-9 1-11-3 6 2 11-2 10-9z" fill="currentColor" /></svg>
      </button>
      <button aria-label="标点" className="flex w-[23px] justify-center">
        <svg width="13" height="15" viewBox="0 0 13 15" fill="none" stroke="currentColor" strokeWidth="1.500"><circle cx="3.500" cy="3.500" r="2.500" /><path d="M10 8v3l-3 3" strokeWidth="3" /></svg>
      </button>
      <button aria-label="语音" className="flex w-[23px] justify-center">
        <svg width="14" height="16" viewBox="0 0 14 16" fill="none" stroke="currentColor" strokeWidth="2">
          <rect x="4" y="0" width="6" height="9" rx="3" fill="currentColor" stroke="none" /><path d="M2 6c0 7 10 7 10 0M7 11v4M3 15h8" />
        </svg>
      </button>
      <button aria-label="手写" className="flex w-[23px] justify-center">
        <svg width="13" height="16" viewBox="0 0 13 16" fill="none" stroke="#8cc0f5">
          <rect x="1" y="1" width="11" height="14" rx="1" strokeWidth="2" /><rect x="5" y="3" width="3" height="5" rx="1" fill="#8cc0f5" /><path d="M3.500 7c0 4 6 4 6 0M6.500 10v2" />
        </svg>
      </button>
      <button aria-label="设置" className="flex w-[23px] justify-center">
        <svg width="16" height="16" viewBox="0 0 16 16" fill="none" stroke="currentColor">
          <circle cx="8" cy="8" r="4" strokeWidth="3" /><path d="M8 0v3M8 13v3M1 4l3 2M12 10l3 2M1 12l3-2M12 6l3-2" strokeWidth="3" />
        </svg>
      </button>
    </div>
  </div>
);

const Watermark = () => (
  <div className="pointer-events-none absolute right-[22px] bottom-[36px] flex items-center gap-2 text-[38px] leading-[46px] whitespace-nowrap text-white [text-shadow:1px_1px_1px_#222]">
    <svg width="40" height="42" viewBox="0 0 40 42">
      <path d="M12 2h15c8 0 11 5 11 12v9c0 8-6 12-14 13l-5 5v-4" fill="#111" />
      <path d="M11 1h15c8 0 10 5 10 12v9c0 8-4 12-12 13l-6 5v-5h-7C4 35 1 31 1 24V12C1 5 4 1 11 1z" fill="#fff" />
      <path d="M26 9c-5-2-8 0-8 5l-3 18M10 19h8M21 19h5" stroke="#111" strokeWidth="2" fill="none" />
    </svg>
    <span className="font-light">@易心trader</span>
  </div>
);

const App = () => (
  <div className="relative flex min-h-screen flex-col overflow-hidden bg-[#f0f0f0] text-black font-['Noto_Sans','Noto_Sans_CJK_SC',sans-serif]">
    <TitleBar />
    <MenuBar />
    <Toolbar />
    <Chart />
    <div className="h-[2px] bg-[#f0f0f0]" />
    <ChartTabs />
    <Terminal />
    <StatusBar />
    <Watermark />
    <ImeBar />
  </div>
);

export default App;
